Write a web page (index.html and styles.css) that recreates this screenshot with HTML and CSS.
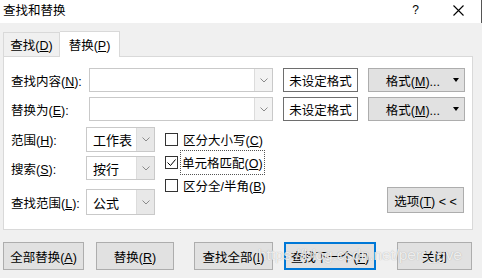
FILE: index.html
```html
<!DOCTYPE html>
<html lang="zh">
<head>
  <meta charset="UTF-8">
  <title>查找和替换</title>
  <link rel="stylesheet" href="styles.css">
</head>
<body>

<div class="dlg">

  <!-- 标题栏 -->
  <div class="titlebar">
    <span class="title">查找和替换</span>
    <span class="help">?</span>
    <svg class="close-x" width="11" height="11" viewBox="0 0 11 11"><path d="M.5 .5l10 10M10.5 .5l-10 10" stroke="#000" stroke-width="1.1"/></svg>
  </div>

  <!-- 选项卡 -->
  <div class="tabs">
    <span class="tab"><span>查找(<u>D</u>)</span></span>
    <span class="tab on"><span>替换(<u>P</u>)</span></span>
  </div>

  <div class="panel">
    <div class="row">
      <span class="lbl">查找内容(<u>N</u>):</span>
      <div class="combo wide"><span class="val"></span><span class="drop"><svg width="8" height="5" viewBox="0 0 8 5"><path d="M.5 .5l3.5 3.5 3.5-3.5" fill="none" stroke="#8a8a8a"/></svg></span></div>
      <span class="fmtbox">未设定格式</span>
      <span class="btn fmt"><span>格式(<u>M</u>)...</span><i class="tri"></i></span>
    </div>
    <div class="row">
      <span class="lbl">替换为(<u>E</u>):</span>
      <div class="combo wide"><span class="val"></span><span class="drop"><svg width="8" height="5" viewBox="0 0 8 5"><path d="M.5 .5l3.5 3.5 3.5-3.5" fill="none" stroke="#8a8a8a"/></svg></span></div>
      <span class="fmtbox">未设定格式</span>
      <span class="btn fmt"><span>格式(<u>M</u>)...</span><i class="tri"></i></span>
    </div>

    <div class="lower">
      <div class="opts">
        <div class="orow">
          <span class="lbl2">范围(<u>H</u>):</span>
          <div class="combo small"><span class="val">工作表</span><span class="drop"><svg width="8" height="5" viewBox="0 0 8 5"><path d="M.5 .5l3.5 3.5 3.5-3.5" fill="none" stroke="#8a8a8a"/></svg></span></div>
        </div>
        <div class="orow">
          <span class="lbl2">搜索(<u>S</u>):</span>
          <div class="combo small"><span class="val">按行</span><span class="drop"><svg width="8" height="5" viewBox="0 0 8 5"><path d="M.5 .5l3.5 3.5 3.5-3.5" fill="none" stroke="#8a8a8a"/></svg></span></div>
        </div>
        <div class="orow">
          <span class="lbl2">查找范围(<u>L</u>):</span>
          <div class="combo small"><span class="val">公式</span><span class="drop"><svg width="8" height="5" viewBox="0 0 8 5"><path d="M.5 .5l3.5 3.5 3.5-3.5" fill="none" stroke="#8a8a8a"/></svg></span></div>
        </div>
      </div>

      <div class="checks">
        <label class="chk"><span class="box"></span><span>区分大小写(<u>C</u>)</span></label>
        <label class="chk"><span class="box"><svg width="11" height="11" viewBox="0 0 11 11"><path d="M1.5 5.5l3 3 5-6" fill="none" stroke="#000" stroke-width="1"/></svg></span><span class="focus">单元格匹配(<u>O</u>)</span></label>
        <label class="chk"><span class="box"></span><span>区分全/半角(<u>B</u>)</span></label>
      </div>

      <span class="btn more"><span>选项(<u>T</u>) &lt; &lt;</span></span>
    </div>
  </div>

  <!-- 底部按钮 -->
  <div class="actions">
    <span class="btn b1"><span>全部替换(<u>A</u>)</span></span>
    <span class="btn b2"><span>替换(<u>R</u>)</span></span>
    <span class="btn b3"><span>查找全部(<u>I</u>)</span></span>
    <span class="btn b4 def"><span>查找下一个(<u>F</u>)</span></span>
    <span class="btn b5"><span>关闭</span></span>
  </div>

  <span class="wm">https://blog.csdn.net/pers_gve</span>
</div>

</body>
</html>
```

FILE: styles.css
```css
:root{
  --c-bg:#f0f0f0; --c-line:#d9d9d9; --c-btn:#e1e1e1; --c-btn-bd:#adadad;
  --c-blue:#0078d7;
}
body{
  margin:0;background:var(--c-bg);color:#000;
  font-family:"Liberation Sans","Noto Sans CJK SC",sans-serif;font-size:12px
}
u{text-decoration:underline;text-underline-offset:1px}
.dlg{width:482px;height:278px;position:relative;overflow:hidden}

/* 标题栏 */
.titlebar{
  height:23px;background:#fff;display:flex;align-items:center;
  padding:0 0 2px 3px;box-sizing:border-box;border-right:1px solid #555
}
.title{font-size:12.5px;line-height:16px}
.help{margin-left:auto;font-size:12px;margin-right:34px;margin-top:-1px}
.close-x{margin-right:17px}

/* 选项卡 */
.tabs{height:33px;display:flex;align-items:flex-end;padding-left:3px}
.tab{
  height:24px;width:57px;box-sizing:border-box;display:flex;align-items:center;
  justify-content:center;border:1px solid var(--c-line);border-bottom:none;
  background:var(--c-bg);font-size:12.5px
}
.tab.on{height:26px;width:60px;background:#fff;border-left:none;margin-bottom:-1px;position:relative;z-index:1}

.panel{
  margin-left:3px;width:470px;height:174px;box-sizing:border-box;background:#fff;
  border:1px solid var(--c-line);padding:11px 7px 0 7px
}
.row{display:flex;align-items:center;height:24px;margin-bottom:5px}
.lbl{width:78px;font-size:12.5px}

.combo{
  display:flex;height:100%;box-sizing:border-box;border:1px solid #c9c9c9;background:#fff
}
.combo .val{flex:1;padding-left:6px;display:flex;align-items:center;font-size:13px}
.combo .drop{
  width:17px;display:flex;align-items:center;justify-content:center;
  border-left:1px solid #dcdcdc;background:#f3f3f3
}
.combo.wide{width:184px}
.combo.small{width:69px}
.combo.small .drop{background:#e8e8e8}

.fmtbox{
  margin-left:10px;width:75px;height:24px;box-sizing:border-box;border:1px solid #6e6e6e;
  display:flex;align-items:center;justify-content:center;font-size:12.5px
}
.btn{
  box-sizing:border-box;background:var(--c-btn);border:1px solid var(--c-btn-bd);
  display:flex;align-items:center;justify-content:center;font-size:12.5px
}
.fmt{margin-left:10px;width:97px;height:24px;justify-content:flex-end;padding-right:5px}
.fmt .tri{
  width:0;height:0;border-left:3px solid transparent;border-right:3px solid transparent;
  border-top:4px solid #000;margin-left:13px
}

/* 下半部分 */
.lower{display:flex;margin-top:6px;height:88px}
.opts{display:flex;flex-direction:column;gap:4px}
.orow{display:flex;align-items:center;height:26px}
.lbl2{width:75px;font-size:12.5px}
.orow:nth-child(2){height:25px}
.orow:nth-child(3){height:27px;margin-top:5px}

.checks{display:flex;flex-direction:column;margin-left:10px;padding-top:1px}
.chk{display:flex;align-items:center;height:23px;font-size:12.5px}
.box{
  width:13px;height:13px;box-sizing:border-box;border:1px solid #333;background:#fff;
  margin-right:5px;display:flex;align-items:center;justify-content:center
}
.focus{outline:1px dotted #555;padding:2px 1px;margin-left:-2px}

.more{margin-left:auto;align-self:flex-end;width:77px;height:26px;margin-bottom:2px;margin-right:1px}

/* 底部按钮 */
.actions{display:flex;padding:12px 0 0 3px}
.actions .btn{height:28px}
.b1{width:81px}
.b2{width:78px;margin-left:12px}
.b3{width:79px;margin-left:20px}
.b4{width:92px;margin-left:11px}
.b5{width:75px;margin-left:21px}
.def{border-color:var(--c-blue);box-shadow:inset 0 0 0 1px var(--c-blue)}

/* 水印 */
.wm{
  position:absolute;left:258px;top:246px;font-family:"Liberation Sans",sans-serif;font-size:15.5px;
  color:rgba(255,255,255,.8);text-shadow:0 0 1px rgba(120,120,120,.6);letter-spacing:-.1px
}
```
